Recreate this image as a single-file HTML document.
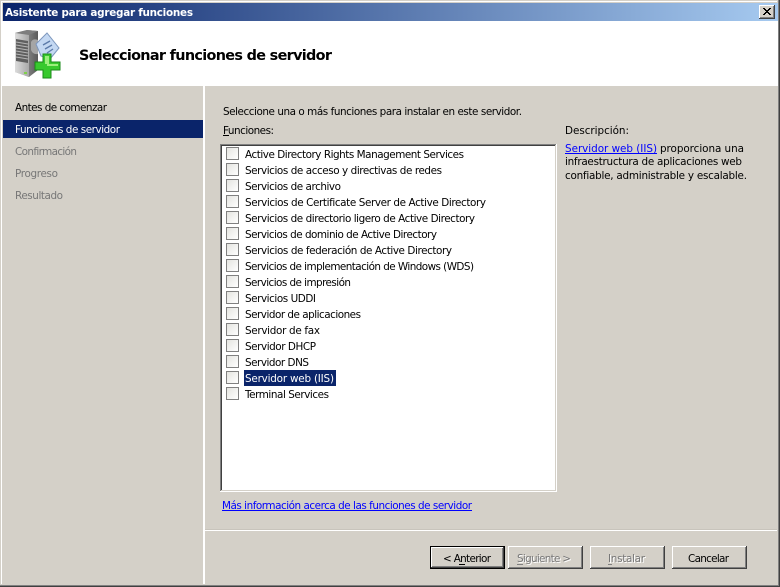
<!DOCTYPE html>
<html lang="es"><head><meta charset="utf-8"><title>Asistente para agregar funciones</title>
<style>
html,body{margin:0;padding:0;background:#d4d0c8;width:780px;height:587px;overflow:hidden}
svg{display:block}
text{font-family:"DejaVu Sans","Liberation Sans",sans-serif;font-size:10.4px;fill:#000;white-space:pre}
.g{fill:#777}
.w{fill:#fff}
.l{fill:#0000ff}
.b{font-weight:bold}
</style></head><body>
<svg width="780" height="587" viewBox="0 0 780 587" xmlns="http://www.w3.org/2000/svg" shape-rendering="crispEdges">
<defs>
<linearGradient id="t" x1="0" x2="1" y1="0" y2="0"><stop offset="0" stop-color="#0a246a"/><stop offset="1" stop-color="#a6caf0"/></linearGradient>
<linearGradient id="tw" x1="0" x2="1" y1="0" y2="0"><stop offset="0" stop-color="#9a9a9a"/><stop offset=".45" stop-color="#8a8a8a"/><stop offset="1" stop-color="#5a5a5a"/></linearGradient>
<linearGradient id="fr" x1="0" x2="1" y1="0" y2="0"><stop offset="0" stop-color="#dcdcdc"/><stop offset="1" stop-color="#a8a8a8"/></linearGradient>
<linearGradient id="cb" x1="0" x2="1" y1="0" y2="1"><stop offset="0" stop-color="#e4e4e0"/><stop offset="1" stop-color="#fff"/></linearGradient>
<g id="c"><rect x="0" y="0" width="13" height="13" fill="#808080"/><rect x="1" y="1" width="11" height="11" fill="url(#cb)"/></g>
</defs>
<!-- window frame -->
<rect width="780" height="587" fill="#404040"/>
<rect width="779" height="586" fill="#808080"/>
<rect width="778" height="585" fill="#d4d0c8"/>
<rect x="1" y="1" width="776" height="1" fill="#fff"/>
<rect x="1" y="1" width="1" height="583" fill="#fff"/>
<rect x="2" y="2" width="776" height="583" fill="#d4d0c8"/>
<!-- title -->
<rect x="3" y="3" width="775" height="18" fill="url(#t)"/>
<text x="5" y="16" class="w b" textLength="188">Asistente para agregar funciones</text>
<rect x="759" y="5" width="16" height="14" fill="#404040"/>
<rect x="759" y="5" width="15" height="13" fill="#fff"/>
<rect x="760" y="6" width="14" height="12" fill="#808080"/>
<rect x="760" y="6" width="13" height="11" fill="#d4d0c8"/>
<path d="M763 8h2v1h1v1h2V9h1V8h2v1h-1v1h-1v1h-1v1h1v1h1v1h1v1h-2v-1h-1v-1h-2v1h-1v1h-2v-1h1v-1h1v-1h1v-1h-1v-1h-1V9h-1z" fill="#000"/>
<!-- header -->
<rect x="2" y="21" width="776" height="65" fill="#fff"/>
<g shape-rendering="auto">
<path d="M15 33 L27 30 L38 31 L38 70 L29 77 L15 72Z" fill="url(#tw)"/>
<path d="M15 33 L27 30 L38 31 L29 35Z" fill="#7e7e7e"/>
<path d="M15 33 L29 35 L29 77 L15 72Z" fill="url(#fr)"/>
<path d="M16 39 L28 41 L28 63 L16 61Z" fill="#5f5f5f"/>
<path d="M16 42l12 2M16 45l12 2M16 48l12 2M16 51l12 2M16 54l12 2M16 57l12 2" stroke="#b4b4b4" stroke-width="1"/>
<rect x="24" y="72" width="3" height="2" fill="#7ed04a"/>
<path d="M31 42 Q33 38 38 40 L38 54 Q33 55 31 50Z" fill="#a5a5a5"/>
<path d="M36 44 L47 33 L59 48 L50 59 L41 56Z" fill="#c4d8f2" stroke="#7d97bd" stroke-width="1"/>
<path d="M43 45l7-4M45 49l7-4M47 53l6-4" stroke="#5b7aa8" stroke-width="1.3"/>
<path d="M43 54h8v8h9v8h-9v8h-8v-8h-8v-8h8z" fill="#38c92e" stroke="#1a8a18" stroke-width="1"/>
<path d="M45 56h4v8h9v2h-11v-2h-2z" fill="#9bef7c"/>
</g>
<text x="79" y="60" class="b" style="font-size:14.4px" textLength="253">Seleccionar funciones de servidor</text>
<!-- sidebar -->
<rect x="203" y="86" width="2" height="498" fill="#fff"/>
<rect x="3" y="120" width="200" height="18" fill="#0a246a"/>
<text x="15" y="111" textLength="92">Antes de comenzar</text>
<text x="15" y="133" class="w" textLength="105">Funciones de servidor</text>
<text x="15" y="155" class="g" textLength="62">Confirmación</text>
<text x="15" y="177" class="g" textLength="43">Progreso</text>
<text x="15" y="199" class="g" textLength="48">Resultado</text>
<!-- content -->
<text x="223" y="115" textLength="299">Seleccione una o más funciones para instalar en este servidor.</text>
<text x="223" y="134" textLength="51">Funciones:</text>
<rect x="223" y="135" width="6" height="1" fill="#000"/>
<!-- list -->
<rect x="220" y="144" width="337" height="348" fill="#fff"/>
<rect x="220" y="144" width="336" height="1" fill="#808080"/>
<rect x="220" y="144" width="1" height="347" fill="#808080"/>
<rect x="221" y="145" width="334" height="1" fill="#404040"/>
<rect x="221" y="145" width="1" height="345" fill="#404040"/>
<rect x="555" y="145" width="1" height="346" fill="#d4d0c8"/>
<rect x="221" y="490" width="335" height="1" fill="#d4d0c8"/>
<use href="#c" x="226" y="147"/><use href="#c" x="226" y="163"/><use href="#c" x="226" y="179"/><use href="#c" x="226" y="195"/>
<use href="#c" x="226" y="211"/><use href="#c" x="226" y="227"/><use href="#c" x="226" y="243"/><use href="#c" x="226" y="259"/>
<use href="#c" x="226" y="275"/><use href="#c" x="226" y="291"/><use href="#c" x="226" y="307"/><use href="#c" x="226" y="323"/>
<use href="#c" x="226" y="339"/><use href="#c" x="226" y="355"/><use href="#c" x="226" y="371"/><use href="#c" x="226" y="387"/>
<text x="245" y="158" textLength="219">Active Directory Rights Management Services</text>
<text x="245" y="174" textLength="197">Servicios de acceso y directivas de redes</text>
<text x="245" y="190" textLength="96">Servicios de archivo</text>
<text x="245" y="206" textLength="241">Servicios de Certificate Server de Active Directory</text>
<text x="245" y="222" textLength="230">Servicios de directorio ligero de Active Directory</text>
<text x="245" y="238" textLength="192">Servicios de dominio de Active Directory</text>
<text x="245" y="254" textLength="207">Servicios de federación de Active Directory</text>
<text x="245" y="270" textLength="229">Servicios de implementación de Windows (WDS)</text>
<text x="245" y="286" textLength="106">Servicios de impresión</text>
<text x="245" y="302" textLength="71">Servicios UDDI</text>
<text x="245" y="318" textLength="116">Servidor de aplicaciones</text>
<text x="245" y="334" textLength="75">Servidor de fax</text>
<text x="245" y="350" textLength="71">Servidor DHCP</text>
<text x="245" y="366" textLength="64">Servidor DNS</text>
<rect x="244" y="370" width="92" height="16" fill="#0a246a"/>
<text x="245" y="382" class="w" textLength="89">Servidor web (IIS)</text>
<text x="245" y="398" textLength="84">Terminal Services</text>
<!-- link -->
<text x="222" y="509" class="l" textLength="250">Más información acerca de las funciones de servidor</text>
<rect x="222" y="510" width="250" height="1" fill="#0000ff"/>
<!-- description -->
<text x="565" y="134" textLength="64">Descripción:</text>
<text x="565" y="152" class="l" textLength="92">Servidor web (IIS)</text>
<rect x="565" y="153" width="92" height="1" fill="#0000ff"/>
<text x="660" y="152" textLength="84">proporciona una</text>
<text x="565" y="165" textLength="177">infraestructura de aplicaciones web</text>
<text x="565" y="179" textLength="182">confiable, administrable y escalable.</text>
<!-- footer separator -->
<rect x="205" y="529" width="572" height="1" fill="#c8c4bc"/>
<rect x="205" y="530" width="572" height="1" fill="#fff"/>
<!-- buttons -->
<rect x="430" y="546" width="75" height="23" fill="#000"/>
<rect x="431" y="547" width="73" height="21" fill="#404040"/>
<rect x="431" y="547" width="72" height="20" fill="#fff"/>
<rect x="432" y="548" width="71" height="19" fill="#808080"/>
<rect x="432" y="548" width="70" height="18" fill="#d4d0c8"/>
<text x="443" y="562" textLength="48">&lt; Anterior</text>
<rect x="459" y="564" width="6" height="1" fill="#000"/>

<rect x="508" y="546" width="75" height="23" fill="#404040"/>
<rect x="508" y="546" width="74" height="22" fill="#fff"/>
<rect x="509" y="547" width="73" height="21" fill="#808080"/>
<rect x="509" y="547" width="72" height="20" fill="#d4d0c8"/>
<text x="518" y="563" class="w" textLength="54">Siguiente &gt;</text>
<text x="517" y="562" class="g" textLength="54">Siguiente &gt;</text>
<rect x="517" y="564" width="6" height="1" fill="#808080"/>

<rect x="590" y="546" width="75" height="23" fill="#404040"/>
<rect x="590" y="546" width="74" height="22" fill="#fff"/>
<rect x="591" y="547" width="73" height="21" fill="#808080"/>
<rect x="591" y="547" width="72" height="20" fill="#d4d0c8"/>
<text x="609" y="563" class="w" textLength="37">Instalar</text>
<text x="608" y="562" class="g" textLength="37">Instalar</text>
<rect x="608" y="564" width="4" height="1" fill="#808080"/>

<rect x="672" y="546" width="75" height="23" fill="#404040"/>
<rect x="672" y="546" width="74" height="22" fill="#fff"/>
<rect x="673" y="547" width="73" height="21" fill="#808080"/>
<rect x="673" y="547" width="72" height="20" fill="#d4d0c8"/>
<text x="688" y="562" textLength="41">Cancelar</text>
</svg>
</body></html>
